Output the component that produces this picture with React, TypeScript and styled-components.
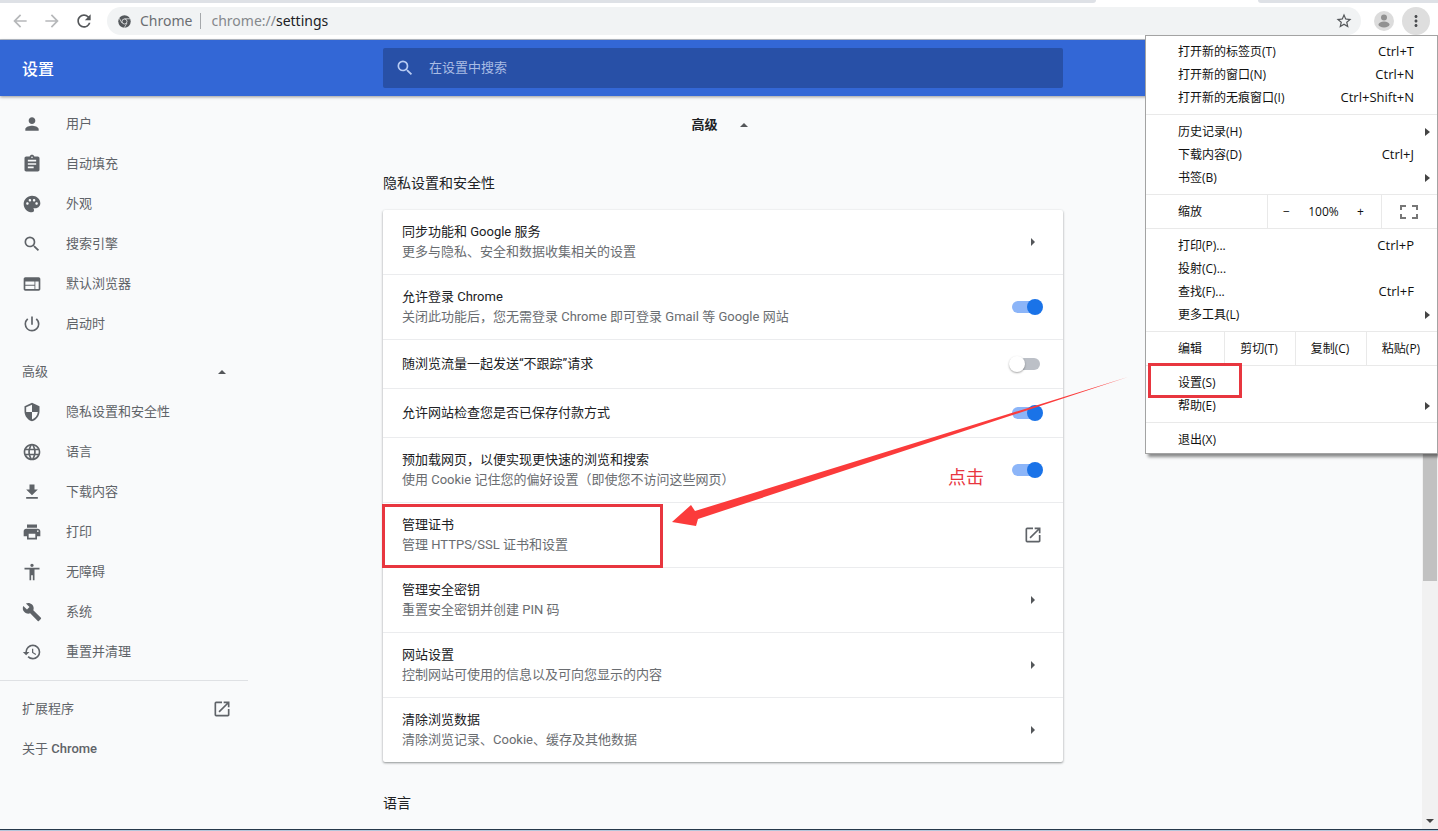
import React from "react";
import styled, { createGlobalStyle } from "styled-components";
import {
  MdAccessibility,
  MdArrowBack,
  MdArrowForward,
  MdAssignment,
  MdBuild,
  MdLanguage,
  MdMoreVert,
  MdOpenInNew,
  MdPalette,
  MdPerson,
  MdPowerSettingsNew,
  MdPrint,
  MdRefresh,
  MdRestore,
  MdSearch,
  MdSecurity,
  MdStarBorder,
  MdWeb,
} from "react-icons/md";

const uiFont = `Roboto, "Noto Sans CJK SC", sans-serif`;
const systemFont = `"Open Sans", "Noto Sans CJK SC", sans-serif`;
const columns = "minmax(266px, 383fr) minmax(0, 680px) 359fr";
const red = "#e8363f";

const GlobalStyle = createGlobalStyle`
  *, *::before, *::after { box-sizing: border-box; }
  body { margin: 0; background: #f9fafb; }
  button, input { font: inherit; color: inherit; }
  button { border: 0; padding: 0; margin: 0; background: none; }
  h1, h2, ul, p { margin: 0; padding: 0; font-weight: 400; }
  ul { list-style: none; }
  a { color: inherit; text-decoration: none; }
`;

const Window = styled.div`
  display: flex;
  flex-direction: column;
  height: 100vh;
  overflow: hidden;
  position: relative;
  font: 13px/20px ${uiFont};
  color: #202124;
  background: #f9fafb;
`;

const TabStrip = styled.div`
  flex: none;
  display: flex;
  height: 3px;
  background: #fff;
`;

const InactiveTabs = styled.div<{ $side: "left" | "right" }>`
  background: #dee1e6;
  ${(p) =>
    p.$side === "left"
      ? "flex: 1; border-bottom-right-radius: 3px;"
      : "width: 180px; border-bottom-left-radius: 3px;"}
`;

const ActiveTab = styled.div`
  width: 162px;
`;

const Toolbar = styled.div`
  flex: none;
  display: flex;
  align-items: center;
  height: 37px;
  padding: 0 8px 0 4px;
  background: #fff;
  border-bottom: 1px solid #b9bfca;
  font: 14px/20px "Noto Sans", "Noto Sans CJK SC", sans-serif;
`;

const NavButton = styled.button<{ $muted?: boolean }>`
  display: grid;
  place-items: center;
  width: 32px;
  height: 28px;
  font-size: 20px;
  color: ${(p) => (p.$muted ? "#b6b8ba" : "#54575a")};
`;

const AddressBar = styled.div`
  flex: 1;
  display: flex;
  align-items: center;
  height: 28px;
  margin-left: 7px;
  padding: 0 8px 0 11px;
  border-radius: 14px;
  background: #f1f3f4;
  color: #6b6e72;
`;

const SiteName = styled.span`
  margin-left: 9px;
  padding-right: 8px;
  border-right: 1px solid #a5a8ab;
  line-height: 16px;
`;

const Url = styled.span`
  flex: 1;
  margin-left: 10px;
  color: #85888c;
  b { font-weight: 400; color: #202124; }
`;

const StarButton = styled.button`
  display: grid;
  font-size: 18px;
  color: #54575a;
`;

const AvatarButton = styled.button`
  display: grid;
  margin-left: 13px;
`;

const MenuButton = styled.button`
  display: grid;
  place-items: center;
  width: 28px;
  height: 28px;
  margin-left: 8px;
  border-radius: 50%;
  background: #dedede;
  font-size: 18px;
  color: #4a4c4f;
`;

const Header = styled.header`
  flex: none;
  display: grid;
  grid-template-columns: ${columns};
  align-items: center;
  height: 56px;
  padding-right: 16px;
  background: #3367d6;
  color: #fff;
  box-shadow: 0 1px 3px rgba(0, 0, 0, 0.4);
  position: relative;
`;

const Title = styled.h1`
  padding: 4px 0 0 22px;
  font-size: 16px;
  line-height: 24px;
  font-weight: 500;
`;

const SearchBox = styled.label`
  display: flex;
  align-items: center;
  gap: 14px;
  height: 40px;
  padding: 0 12px;
  border-radius: 2px;
  background: #2850a7;
  color: #b9ccf3;
  svg { font-size: 20px; }
`;

const SearchInput = styled.input`
  flex: 1;
  border: 0;
  padding: 0;
  background: none;
  outline: none;
  &::placeholder { color: #a9bce4; opacity: 1; }
`;

const Body = styled.div`
  flex: 1;
  min-height: 0;
  display: flex;
`;

const Columns = styled.div`
  flex: 1;
  min-width: 0;
  display: grid;
  grid-template-columns: ${columns};
  overflow: hidden;
`;

const Sidebar = styled.nav`
  width: 248px;
  padding-top: 8px;
  color: #5f6368;
`;

const NavLink = styled.a`
  display: flex;
  align-items: center;
  height: 40px;
  padding-left: 22px;
  svg { font-size: 20px; margin-right: 24px; }
`;

const NavLabel = styled.span`
  padding-bottom: 1px;
  b { font-weight: 500; }
`;

const NavFooterLink = styled.a`
  display: flex;
  align-items: center;
  justify-content: space-between;
  height: 40px;
  padding: 0 16px 0 22px;
  svg { font-size: 20px; }
`;

const AdvancedNav = styled.button`
  display: flex;
  align-items: center;
  justify-content: space-between;
  width: 100%;
  height: 40px;
  margin-top: 8px;
  padding: 0 22px;
`;

const NavRule = styled.hr`
  height: 1px;
  margin: 8px 0;
  border: 0;
  background: #dfe1e4;
`;

const Main = styled.main`
  padding-top: 12px;
`;

const AdvancedToggle = styled.button`
  display: flex;
  align-items: center;
  justify-content: center;
  gap: 22px;
  width: 100%;
  height: 34px;
  padding-right: 7px;
  font-weight: 700;
`;

const Section = styled.section`
  margin-top: 14px;
`;

const SectionTitle = styled.h2`
  height: 54px;
  font-size: 14px;
  line-height: 54px;
`;

const Card = styled.div`
  position: relative;
  border-radius: 2px;
  background: #fff;
  box-shadow: 0 1px 2px rgba(60, 64, 67, 0.4), 0 1px 3px rgba(60, 64, 67, 0.2);
`;

const Row = styled.div<{ $compact?: boolean }>`
  position: relative;
  display: flex;
  align-items: center;
  justify-content: space-between;
  height: ${(p) => (p.$compact ? 49 : 65)}px;
  padding: 0 20px 0 19px;
  border-bottom: 1px solid #ebecee;
  &:last-of-type { height: 64px; border-bottom: 0; }
`;

const RowHint = styled.p`
  color: #6a6d71;
`;

const RowButton = styled.button`
  display: grid;
  place-items: center;
  width: 20px;
  height: 20px;
  font-size: 20px;
  color: #5f6368;
`;

const Switch = styled.input.attrs({ type: "checkbox", role: "switch" })`
  appearance: none;
  display: flex;
  align-items: center;
  width: 28px;
  height: 12px;
  margin: 0 3px 0 0;
  border-radius: 6px;
  background: #bcc0c7;
  &::before {
    content: "";
    flex: none;
    width: 16px;
    height: 16px;
    margin-left: -3px;
    border-radius: 50%;
    background: #fff;
    box-shadow: 0 1px 2px rgba(0, 0, 0, 0.35);
  }
  &:checked { background: #8cb5f8; }
  &:checked::before { margin-left: 15px; background: #1a73e8; box-shadow: none; }
`;

const Highlight = styled.div<{ $place: "row" | "menu" }>`
  position: absolute;
  border: 3px solid ${red};
  pointer-events: none;
  ${(p) =>
    p.$place === "row"
      ? "left: -1px; top: 1px; width: 281px; height: 64px;"
      : "left: 2px; top: -8px; width: 94px; height: 35px;"}
`;

const ArrowMark = styled.svg`
  position: absolute;
  left: 289px;
  top: 166px;
  pointer-events: none;
`;

const ClickNote = styled.p`
  position: absolute;
  right: 79px;
  top: 255px;
  font-size: 18px;
  line-height: 26px;
  color: ${red};
`;

const Scrollbar = styled.div`
  display: flex;
  flex-direction: column;
  align-items: center;
  justify-content: space-between;
  width: 16px;
  padding-bottom: 6px;
  background: #f1f1f1;
`;

const Thumb = styled.div`
  width: 14px;
  height: 485px;
  background: #c1c1c1;
`;

const Taskbar = styled.div`
  flex: none;
  height: 2px;
  border-top: 1px solid #26384a;
  background: #b4c6da;
`;

const Menu = styled.div`
  position: absolute;
  top: 35px;
  right: 0;
  width: 293px;
  border: 1px solid #a3a3a3;
  background: #fff;
  box-shadow: 3px 3px 3px rgba(0, 0, 0, 0.45);
  font: 12px/23px ${systemFont};
  color: #111;
`;

const MenuGroup = styled.ul`
  padding: 5px 0;
  &:first-child { padding-top: 4px; }
  &:last-child { padding-bottom: 2px; }
  & + &, div + & { border-top: 1px solid #e9e9e9; }
`;

const MenuItem = styled.li`
  position: relative;
`;

const MenuItemButton = styled.button`
  display: flex;
  align-items: center;
  justify-content: space-between;
  width: 100%;
  height: 23px;
  padding: 0 23px 0 32px;
  text-align: left;
`;

const Shortcut = styled.span`
  font-size: 13px;
`;

const Submenu = styled.svg`
  margin-right: -16px;
`;

const MenuBar = styled.div`
  display: flex;
  height: 34px;
  border-top: 1px solid #e9e9e9;
  line-height: 33px;
`;

const MenuBarLabel = styled.span`
  flex: 1;
  padding-left: 32px;
`;

const MenuBarCell = styled.div<{ $width: number }>`
  display: flex;
  align-items: center;
  justify-content: center;
  width: ${(p) => p.$width}px;
  padding-right: 2px;
  border-left: 1px solid #e9e9e9;
  svg { display: block; }
`;

const ZoomButton = styled.button`
  width: 34px;
`;

const ZoomValue = styled.span`
  width: 40px;
  text-align: center;
`;

const DownloadIcon = () => (
  <svg viewBox="0 0 24 24" width="1em" height="1em" fill="currentColor">
    <path d="M19 9h-4V3H9v6H5l7 7 7-7zM5 18v2h14v-2H5z" />
  </svg>
);

const ChromeIcon = () => (
  <svg width="13" height="13" viewBox="0 0 26 26">
    <circle cx="13" cy="13" r="12.5" fill="#54585c" />
    <circle cx="13" cy="13" r="5" fill="none" stroke="#f1f3f4" strokeWidth="1.6" />
    <path d="M13 7.5H24M8 16L2.5 6.5M18 16L12.5 25.5" stroke="#f1f3f4" strokeWidth="1.4" />
  </svg>
);

const AvatarIcon = () => (
  <svg width="20" height="20" viewBox="0 0 20 20">
    <circle cx="10" cy="10" r="10" fill="#dcdcdc" />
    <circle cx="10" cy="6.5" r="3" fill="#919191" />
    <ellipse cx="10" cy="13.5" rx="5.5" ry="3" fill="#919191" />
  </svg>
);

const UpIcon = () => (
  <svg width="8" height="4" viewBox="0 0 8 4" fill="#54575a">
    <path d="M0 4L4 0l4 4z" />
  </svg>
);

const RightIcon = () => (
  <svg width="4" height="8" viewBox="0 0 4 8" fill="#54575a">
    <path d="M0 0l4 4-4 4z" />
  </svg>
);

const basicLinks = [
  { label: "用户", Icon: MdPerson },
  { label: "自动填充", Icon: MdAssignment },
  { label: "外观", Icon: MdPalette },
  { label: "搜索引擎", Icon: MdSearch },
  { label: "默认浏览器", Icon: MdWeb },
  { label: "启动时", Icon: MdPowerSettingsNew },
];

const advancedLinks = [
  { label: "隐私设置和安全性", Icon: MdSecurity },
  { label: "语言", Icon: MdLanguage },
  { label: "下载内容", Icon: DownloadIcon },
  { label: "打印", Icon: MdPrint },
  { label: "无障碍", Icon: MdAccessibility },
  { label: "系统", Icon: MdBuild },
  { label: "重置并清理", Icon: MdRestore },
];

type Setting = {
  title: string;
  hint?: string;
  kind: "page" | "on" | "off" | "external";
  marked?: boolean;
};

const settings: Setting[] = [
  { title: "同步功能和 Google 服务", hint: "更多与隐私、安全和数据收集相关的设置", kind: "page" },
  { title: "允许登录 Chrome", hint: "关闭此功能后，您无需登录 Chrome 即可登录 Gmail 等 Google 网站", kind: "on" },
  { title: "随浏览流量一起发送“不跟踪”请求", kind: "off" },
  { title: "允许网站检查您是否已保存付款方式", kind: "on" },
  { title: "预加载网页，以便实现更快速的浏览和搜索", hint: "使用 Cookie 记住您的偏好设置（即使您不访问这些网页）", kind: "on" },
  { title: "管理证书", hint: "管理 HTTPS/SSL 证书和设置", kind: "external", marked: true },
  { title: "管理安全密钥", hint: "重置安全密钥并创建 PIN 码", kind: "page" },
  { title: "网站设置", hint: "控制网站可使用的信息以及可向您显示的内容", kind: "page" },
  { title: "清除浏览数据", hint: "清除浏览记录、Cookie、缓存及其他数据", kind: "page" },
];

type Entry = { label: string; keys?: string; sub?: boolean; marked?: boolean };

const MenuEntries = ({ items }: { items: Entry[] }) => (
  <MenuGroup>
    {items.map((item) => (
      <MenuItem key={item.label}>
        <MenuItemButton>
          <span>{item.label}</span>
          {item.keys && <Shortcut>{item.keys}</Shortcut>}
          {item.sub && (
            <Submenu width="5" height="8" viewBox="0 0 5 8" fill="#444">
              <path d="M0 0l5 4-5 4z" />
            </Submenu>
          )}
        </MenuItemButton>
        {item.marked && <Highlight $place="menu" />}
      </MenuItem>
    ))}
  </MenuGroup>
);

const SettingRow = ({ title, hint, kind, marked }: Setting) => {
  const id = React.useId();
  const toggles = kind === "on" || kind === "off";
  return (
    <Row $compact={!hint}>
      <div>
        {toggles ? <label htmlFor={id}>{title}</label> : <p>{title}</p>}
        {hint && <RowHint>{hint}</RowHint>}
      </div>
      {toggles && <Switch id={id} defaultChecked={kind === "on"} />}
      {kind === "page" && <RowButton aria-label={title}><RightIcon /></RowButton>}
      {kind === "external" && <RowButton aria-label={title}><MdOpenInNew /></RowButton>}
      {marked && <Highlight $place="row" />}
    </Row>
  );
};

export default function App() {
  return (
    <>
      <GlobalStyle />
      <Window>
        <TabStrip>
          <InactiveTabs $side="left" />
          <ActiveTab />
          <InactiveTabs $side="right" />
        </TabStrip>
        <Toolbar>
          <NavButton $muted aria-label="后退"><MdArrowBack /></NavButton>
          <NavButton $muted aria-label="前进"><MdArrowForward /></NavButton>
          <NavButton aria-label="重新加载"><MdRefresh /></NavButton>
          <AddressBar>
            <ChromeIcon />
            <SiteName>Chrome</SiteName>
            <Url>chrome://<b>settings</b></Url>
            <StarButton aria-label="加入书签"><MdStarBorder /></StarButton>
          </AddressBar>
          <AvatarButton aria-label="用户"><AvatarIcon /></AvatarButton>
          <MenuButton aria-label="菜单"><MdMoreVert /></MenuButton>
        </Toolbar>
        <Header>
          <Title>设置</Title>
          <SearchBox>
            <MdSearch />
            <SearchInput type="text" aria-label="在设置中搜索" placeholder="在设置中搜索" />
          </SearchBox>
        </Header>
        <Body>
          <Columns>
            <Sidebar>
              {basicLinks.map(({ label, Icon }) => (
                <NavLink href="#" key={label}><Icon /><NavLabel>{label}</NavLabel></NavLink>
              ))}
              <AdvancedNav><NavLabel>高级</NavLabel><UpIcon /></AdvancedNav>
              {advancedLinks.map(({ label, Icon }) => (
                <NavLink href="#" key={label}><Icon /><NavLabel>{label}</NavLabel></NavLink>
              ))}
              <NavRule />
              <NavFooterLink href="#"><NavLabel>扩展程序</NavLabel><MdOpenInNew /></NavFooterLink>
              <NavFooterLink href="#"><NavLabel>关于 <b>Chrome</b></NavLabel></NavFooterLink>
            </Sidebar>
            <Main>
              <AdvancedToggle>高级<UpIcon /></AdvancedToggle>
              <Section>
                <SectionTitle>隐私设置和安全性</SectionTitle>
                <Card>
                  {settings.map((s) => <SettingRow key={s.title} {...s} />)}
                  <ArrowMark width="458" height="152" viewBox="0 0 458 152">
                    <path d="M0 146L19 129l4 6L456 1 26 143l-2 7z" fill="#fb3b3b" />
                  </ArrowMark>
                  <ClickNote>点击</ClickNote>
                </Card>
              </Section>
              <Section>
                <SectionTitle>语言</SectionTitle>
              </Section>
            </Main>
          </Columns>
          <Scrollbar>
            <Thumb />
            <svg width="8" height="4" viewBox="0 0 8 4" fill="#444"><path d="M0 0h8L4 4z" /></svg>
          </Scrollbar>
        </Body>
        <Taskbar />
        <Menu>
          <MenuEntries
            items={[
              { label: "打开新的标签页(T)", keys: "Ctrl+T" },
              { label: "打开新的窗口(N)", keys: "Ctrl+N" },
              { label: "打开新的无痕窗口(I)", keys: "Ctrl+Shift+N" },
            ]}
          />
          <MenuEntries
            items={[
              { label: "历史记录(H)", sub: true },
              { label: "下载内容(D)", keys: "Ctrl+J" },
              { label: "书签(B)", sub: true },
            ]}
          />
          <MenuBar>
            <MenuBarLabel>缩放</MenuBarLabel>
            <MenuBarCell $width={114}>
              <ZoomButton aria-label="缩小">−</ZoomButton>
              <ZoomValue>100%</ZoomValue>
              <ZoomButton aria-label="放大">+</ZoomButton>
            </MenuBarCell>
            <MenuBarCell $width={56}>
              <button aria-label="全屏">
                <svg width="18" height="14" viewBox="0 0 18 14" fill="none" stroke="#777" strokeWidth="2">
                  <path d="M1 5V1h5M12 1h5v4M17 9v4h-5M6 13H1V9" />
                </svg>
              </button>
            </MenuBarCell>
          </MenuBar>
          <MenuEntries
            items={[
              { label: "打印(P)...", keys: "Ctrl+P" },
              { label: "投射(C)..." },
              { label: "查找(F)...", keys: "Ctrl+F" },
              { label: "更多工具(L)", sub: true },
            ]}
          />
          <MenuBar>
            <MenuBarLabel>编辑</MenuBarLabel>
            <MenuBarCell $width={71}><button>剪切(T)</button></MenuBarCell>
            <MenuBarCell $width={71}><button>复制(C)</button></MenuBarCell>
            <MenuBarCell $width={71}><button>粘贴(P)</button></MenuBarCell>
          </MenuBar>
          <MenuEntries items={[{ label: "设置(S)", marked: true }, { label: "帮助(E)", sub: true }]} />
          <MenuEntries items={[{ label: "退出(X)" }]} />
        </Menu>
      </Window>
    </>
  );
}
